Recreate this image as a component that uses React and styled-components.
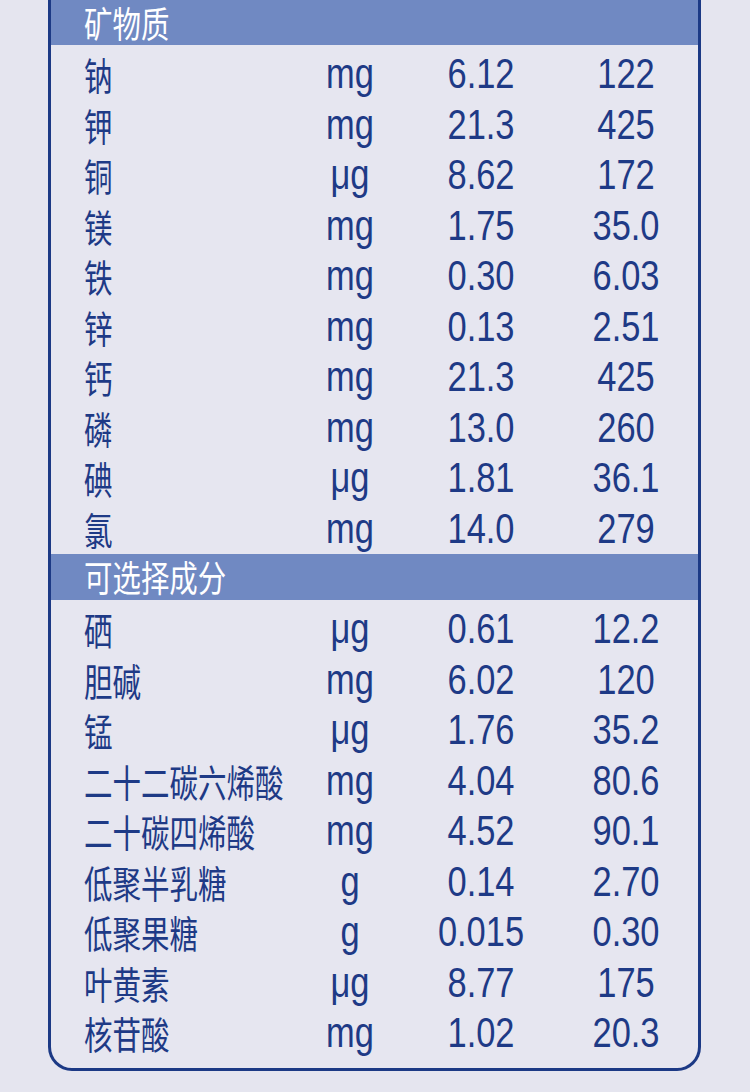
import React from "react";
import styled, { createGlobalStyle } from "styled-components";

const minerals = [
  ["钠", "mg", "6.12", "122"],
  ["钾", "mg", "21.3", "425"],
  ["铜", "μg", "8.62", "172"],
  ["镁", "mg", "1.75", "35.0"],
  ["铁", "mg", "0.30", "6.03"],
  ["锌", "mg", "0.13", "2.51"],
  ["钙", "mg", "21.3", "425"],
  ["磷", "mg", "13.0", "260"],
  ["碘", "μg", "1.81", "36.1"],
  ["氯", "mg", "14.0", "279"],
];

const optional = [
  ["硒", "μg", "0.61", "12.2"],
  ["胆碱", "mg", "6.02", "120"],
  ["锰", "μg", "1.76", "35.2"],
  ["二十二碳六烯酸", "mg", "4.04", "80.6"],
  ["二十碳四烯酸", "mg", "4.52", "90.1"],
  ["低聚半乳糖", "g", "0.14", "2.70"],
  ["低聚果糖", "g", "0.015", "0.30"],
  ["叶黄素", "μg", "8.77", "175"],
  ["核苷酸", "mg", "1.02", "20.3"],
];

const GlobalStyle = createGlobalStyle`
  html, body {
    margin: 0;
    padding: 0;
    background: #e5e5ef;
  }
  body {
    font-family: "Liberation Sans", "Noto Sans CJK SC", sans-serif;
  }
`;

const Page = styled.div`
  width: 750px;
  height: 1092px;
  overflow: hidden;
  background: #e5e5ef;
  padding-left: 48px;
  box-sizing: border-box;
`;

const Card = styled.div`
  width: 653px;
  box-sizing: border-box;
  border: 3px solid #1c3985;
  border-top: none;
  border-radius: 0 0 24px 24px;
  background: #e6e6f0;
`;

const SectionHeader = styled.div`
  height: ${(p) => p.$h}px;
  background: #7089c2;
  display: flex;
  align-items: center;
  padding-left: 33px;
`;

const HeaderText = styled.span`
  display: inline-block;
  color: #ffffff;
  font-family: "Noto Sans CJK SC", sans-serif;
  font-size: 36px;
  line-height: 1.1;
  white-space: nowrap;
  transform: scaleX(0.79);
  transform-origin: left center;
`;

const Body = styled.div`
  padding: 4px 0 ${(p) => p.$bottom}px;
`;

const Row = styled.div`
  display: grid;
  grid-template-columns: 216px 100px 162px 128px;
  height: 50.5px;
  align-items: center;
  padding-left: 33px;
  color: #1e3a86;
`;

const Name = styled.span`
  display: inline-block;
  font-family: "Noto Sans CJK SC", sans-serif;
  font-size: 38px;
  font-weight: 400;
  line-height: 1;
  white-space: nowrap;
  transform: scaleX(0.75);
  transform-origin: left center;
`;

const Cell = styled.span`
  display: block;
  text-align: center;
  font-family: "Liberation Sans", Arial, sans-serif;
  font-size: 42px;
  line-height: 1;
  white-space: nowrap;
  transform: scaleX(0.82);
  transform-origin: center;
`;

const Section = ({ title, rows, headerH, bottom }) => (
  <>
    <SectionHeader $h={headerH}>
      <HeaderText>{title}</HeaderText>
    </SectionHeader>
    <Body $bottom={bottom}>
      {rows.map(([name, unit, a, b]) => (
        <Row key={name}>
          <Name>{name}</Name>
          <Cell>{unit}</Cell>
          <Cell>{a}</Cell>
          <Cell>{b}</Cell>
        </Row>
      ))}
    </Body>
  </>
);

export default function App() {
  return (
    <>
      <GlobalStyle />
      <Page>
        <Card>
          <Section title="矿物质" rows={minerals} headerH={45} bottom={0} />
          <Section title="可选择成分" rows={optional} headerH={46} bottom={9} />
        </Card>
      </Page>
    </>
  );
}
